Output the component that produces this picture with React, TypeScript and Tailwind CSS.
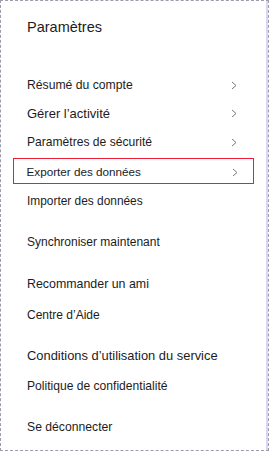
const font = { fontFamily: '"Liberation Sans", Arial, sans-serif' };

type Row = {
  label: string;
  size: string;
  top: string;
  chevron?: boolean;
  active?: boolean;
};

const rows: Row[] = [
  { label: 'Résumé du compte', size: 'text-[12.2px]', top: 'mt-[34px]', chevron: true },
  { label: 'Gérer l’activité', size: 'text-[13px]', top: 'mt-[2.5px]', chevron: true },
  { label: 'Paramètres de sécurité', size: 'text-[12.1px]', top: 'mt-[3px]', chevron: true },
  { label: 'Exporter des données', size: 'text-[11.7px]', top: 'mt-[2px]', chevron: true, active: true },
  { label: 'Importer des données', size: 'text-[11.9px]', top: 'mt-[5.5px]' },
  { label: 'Synchroniser maintenant', size: 'text-[12px]', top: 'mt-[14px]' },
  { label: 'Recommander un ami', size: 'text-[12.4px]', top: 'mt-[16px]' },
  { label: 'Centre d’Aide', size: 'text-[12px]', top: 'mt-[5px]' },
  { label: 'Conditions d’utilisation du service', size: 'text-[12.9px]', top: 'mt-[14.5px]' },
  { label: 'Politique de confidentialité', size: 'text-[12.1px]', top: 'mt-[4.5px]' },
  { label: 'Se déconnecter', size: 'text-[12.2px]', top: 'mt-[15px]' },
];

function Chevron() {
  return (
    <svg width="6" height="9" viewBox="0 0 6 9" fill="none">
      <polyline points="1,1 5,4.5 1,8" stroke="#7a7a7a" strokeWidth="1" />
    </svg>
  );
}

export default function App() {
  return (
    <div
      className="flex h-[451px] w-[269px] flex-col border border-dashed border-[#9c9caa] bg-white text-[#1c1c1c]"
      style={font}
    >
      <div className="flex h-full flex-col border-r-2 border-[#d8d6f2] pl-[12px]">
        <div className="mt-[17px] flex h-[20px] items-center pl-[14px] text-[14.5px]">Paramètres</div>
        <div className="flex w-[241px] flex-col">
          {rows.map((row) => (
            <div
              key={row.label}
              className={
                row.active
                  ? `${row.top} flex h-[26px] items-center justify-between border-[1.5px] border-[#ec1b36] pl-[12.5px] pr-[15.5px] pt-[3px] ${row.size}`
                  : `${row.top} flex h-[26px] items-center justify-between pl-[14px] pr-[17px] ${row.size}`
              }
            >
              <span>{row.label}</span>
              {row.chevron && <Chevron />}
            </div>
          ))}
        </div>
      </div>
    </div>
  );
}
